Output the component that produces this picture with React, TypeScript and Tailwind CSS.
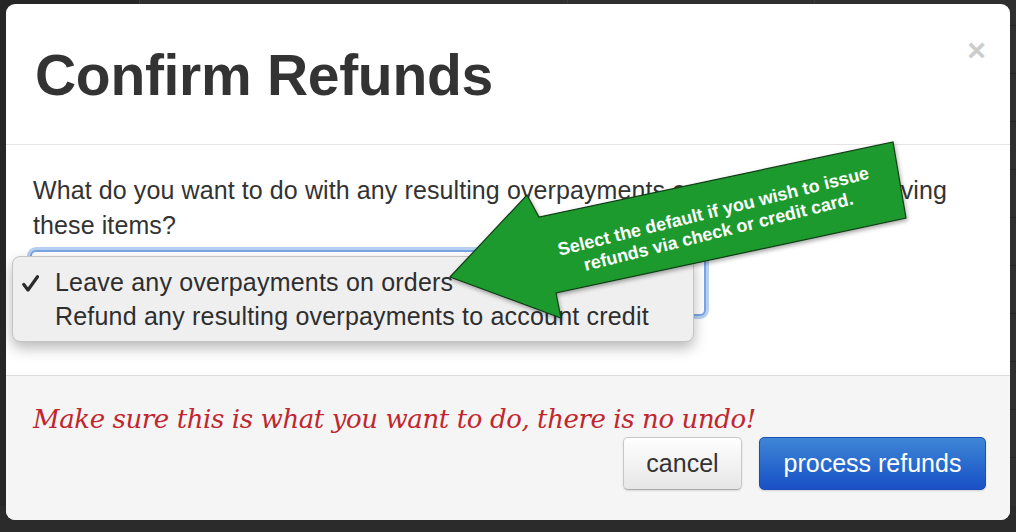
import { useState } from 'react';

const rows = [
  { id: '', date: '', name: '' },
  { id: '', date: '', name: '' },
  { id: '', date: '', name: '' },
  { id: '', date: '', name: '' },
  { id: '', date: '', name: '' },
  { id: '', date: '', name: '' },
  { id: '', date: '', name: '' },
  { id: '', date: '', name: '' },
  { id: '', date: '', name: '' },
  { id: '', date: '', name: '' },
  { id: '02771-3389534', date: '2/17/2020 11:38 am', name: 'Tonya Brooks' },
];

const options = [
  'Leave any overpayments on orders',
  'Refund any resulting overpayments to account credit',
];

function Backdrop() {
  return (
    <div className="flex flex-col mt-[-22px] font-['Liberation_Sans',Arial,sans-serif] text-[24px]">
      {rows.map((r, i) => (
        <div
          key={i}
          className="grid grid-cols-[140px_428px_247px_1fr] h-[48px] border-b border-[#252525]"
        >
          <div className="bg-[#262626] border-r border-[#3a3a3a]" />
          <div className="bg-[#2f2f2f] border-r border-[#3a3a3a] pl-[10px] pt-[12px] text-[#0f2239]">{r.id}</div>
          <div className="bg-[#2f2f2f] border-r border-[#3a3a3a] pl-[10px] pt-[12px] text-[#1a1a1a]">{r.date}</div>
          <div className="bg-[#2f2f2f] pl-[8px] pt-[12px] text-[#1a1a1a]">{r.name}</div>
        </div>
      ))}
    </div>
  );
}

function HelpArrow() {
  return (
    <>
      <svg className="absolute left-0 top-0 pointer-events-none" width="1016" height="532" viewBox="0 0 1016 532">
        <defs>
          <filter id="arrowShadow" x="-10%" y="-10%" width="130%" height="130%">
            <feDropShadow dx="1" dy="2" stdDeviation="2" floodColor="#000" floodOpacity="0.35" />
          </filter>
        </defs>
        <polygon
          points="450,277 527,195 539,217 893,142 906,218 556,293 561,318"
          fill="#1f9a2f"
          stroke="#123d16"
          strokeWidth="1.2"
          strokeLinejoin="miter"
          filter="url(#arrowShadow)"
        />
      </svg>
      <div className="absolute left-[511px] top-[201px] w-[410px] h-[42px] rotate-[-14deg] text-center text-white font-bold text-[18px] leading-[21px] font-['Liberation_Sans',Arial,sans-serif] pointer-events-none">
        Select the default if you wish to issue
        <br />
        refunds via check or credit card.
      </div>
    </>
  );
}

export default function App() {
  const [selected] = useState(0);

  return (
    <div className="relative w-[1016px] h-[532px] overflow-hidden bg-[#2b2b2b]">
      <Backdrop />

      {/* modal */}
      <div className="absolute left-[6px] top-[4px] w-[1004px] h-[516px] rounded-[9px] bg-white overflow-hidden flex flex-col font-['Liberation_Sans',Arial,sans-serif] text-[#333333]">
        <div className="h-[141px] shrink-0 border-b border-[#e5e5e5] flex justify-between pl-[29px] pr-[24px]">
          <h1 className="pt-[43px] text-[57px] leading-none font-bold tracking-[-0.3px]">Confirm Refunds</h1>
          <button className="mt-[30px] h-[30px] text-[32px] leading-none font-bold text-[#cccccc]">×</button>
        </div>

        <div className="relative h-[230px] shrink-0 pl-[27px] pr-[20px] pt-[28px]">
          <p className="text-[25px] leading-[35px] w-[930px] tracking-[0.1px]">
            What do you want to do with any resulting overpayments on orders after removing
            these items?
          </p>
          <div className="absolute left-[24px] top-[105px] w-[676px] h-[66px] rounded-[6px] bg-white border-[2px] border-[#7aa5e6] shadow-[0_0_0_3px_#b6d0f4]" />
          <div className="absolute left-[6px] top-[111px] w-[682px] rounded-[8px] bg-[#efefef] border border-[#c4c4c4] shadow-[0_6px_14px_rgba(0,0,0,0.28)] pt-[9px] pb-[7px]">
            {options.map((o, i) => (
              <div key={o} className="flex items-center h-[34px] text-[25px] text-[#2e2e2e] tracking-[0.2px]">
                <div className="w-[42px] flex pl-[9px]">
                  {i === selected && (
                    <svg width="17" height="17" viewBox="0 0 17 17">
                      <path d="M1.8 9.5 L6 15 L15.5 1.8" fill="none" stroke="#2b2b2b" strokeWidth="3.2" strokeLinecap="round" strokeLinejoin="round" />
                    </svg>
                  )}
                </div>
                <span>{o}</span>
              </div>
            ))}
          </div>
        </div>

        <div className="flex-1 bg-[#f5f5f5] border-t border-[#dddddd] pl-[27px] pr-[24px] pt-[26px]">
          <p className="font-['DejaVu_Serif',Georgia,serif] italic text-[26px] leading-[34px] text-[#c0272d] tracking-[-0.4px]">
            Make sure this is what you want to do, there is no undo!
          </p>
          <div className="flex justify-end gap-[17px] mt-[1px]">
            <button className="w-[119px] h-[53px] rounded-[5px] border border-[#c8c8c8] border-b-[#aaaaaa] bg-gradient-to-b from-white to-[#e6e6e6] text-[25px] text-[#333333] shadow-[0_1px_2px_rgba(0,0,0,0.12)]">
              cancel
            </button>
            <button className="w-[227px] h-[53px] rounded-[5px] border border-[#1d4fb8] bg-gradient-to-b from-[#3f86d6] to-[#1a4fc6] text-[25px] text-white shadow-[0_1px_2px_rgba(0,0,0,0.15)]">
              process refunds
            </button>
          </div>
        </div>
      </div>

      <HelpArrow />
    </div>
  );
}
